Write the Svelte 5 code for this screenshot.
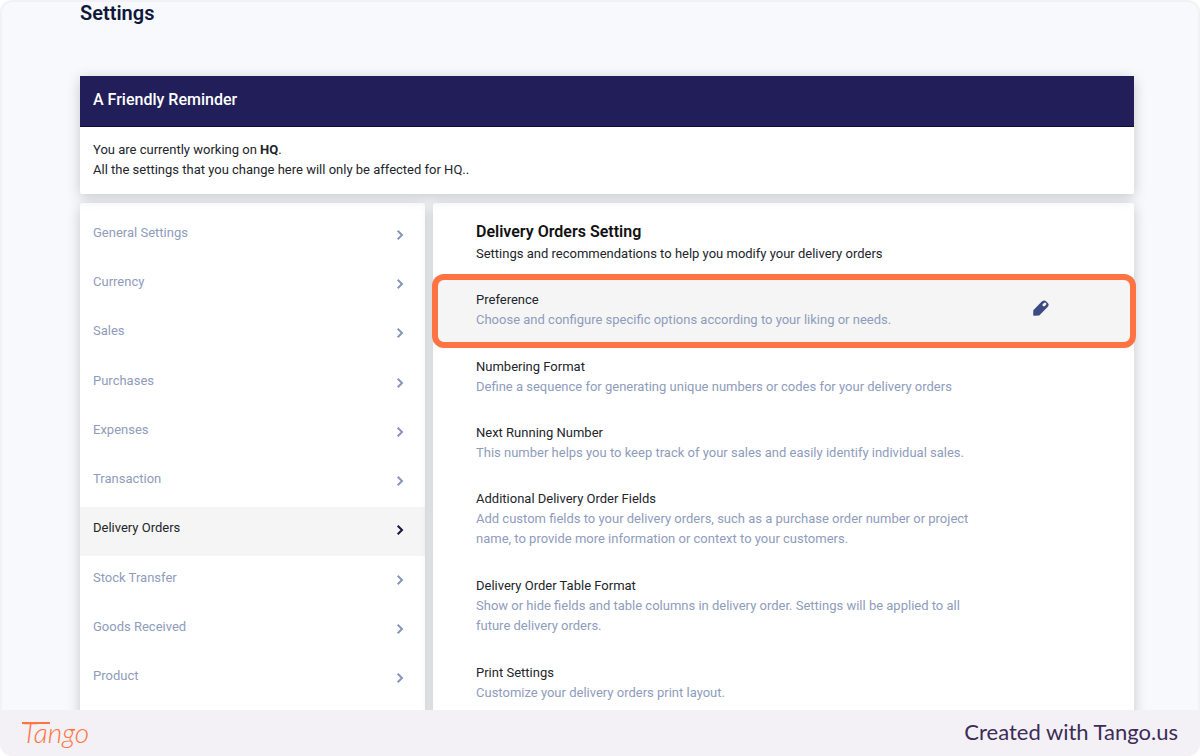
<script>
  const sections = [
    'General Settings', 'Currency', 'Sales', 'Purchases', 'Expenses',
    'Transaction', 'Delivery Orders', 'Stock Transfer', 'Goods Received', 'Product'
  ];
  let active = $state('Delivery Orders');

  const options = [
    { title: 'Preference', text: 'Choose and configure specific options according to your liking or needs.', picked: true },
    { title: 'Numbering Format', text: 'Define a sequence for generating unique numbers or codes for your delivery orders' },
    { title: 'Next Running Number', text: 'This number helps you to keep track of your sales and easily identify individual sales.' },
    { title: 'Additional Delivery Order Fields', text: 'Add custom fields to your delivery orders, such as a purchase order number or project name, to provide more information or context to your customers.', long: true },
    { title: 'Delivery Order Table Format', text: 'Show or hide fields and table columns in delivery order. Settings will be applied to all future delivery orders.', long: true },
    { title: 'Print Settings', text: 'Customize your delivery orders print layout.' }
  ];
</script>

<div class="frame">
  <main>
    <h1>Settings</h1>

    <section class="card reminder">
      <h2>A Friendly Reminder</h2>
      <p>You are currently working on <b>HQ</b>.<br />All the settings that you change here will only be affected for HQ..</p>
    </section>

    <div class="columns">
      <nav class="card" aria-label="Settings sections">
        <ul>
          {#each sections as name}
            <li>
              <button class:active={active === name} onclick={() => (active = name)}>
                <span>{name}</span>
                <svg width="8" height="12" viewBox="0 0 8 12" aria-hidden="true">
                  <path d="M1.7 1.7 6 6 1.7 10.3" />
                </svg>
              </button>
            </li>
          {/each}
        </ul>
      </nav>

      <section class="card detail">
        <header>
          <h2>Delivery Orders Setting</h2>
          <p>Settings and recommendations to help you modify your delivery orders</p>
        </header>
        {#each options as option}
          <article class:picked={option.picked} class:long={option.long}>
            <div class="copy">
              <h3>{option.title}</h3>
              <p>{option.text}</p>
            </div>
            {#if option.picked}
              <button class="edit" aria-label="Edit preference">
                <svg width="16" height="16" viewBox="0 0 16 16" aria-hidden="true">
                  <path fill-rule="evenodd" d="M.3 10.2 8.8 1.6Q11-.5 13 1.2L15 3.2Q16.5 5 14.6 7L6.2 15.4 1 15.8Q.2 15.8.2 15ZM11 2.9 9.9 4Q9 5 9.9 5.9 11 6.8 11.9 5.9L13 4.8Q13.7 4 13 3.1 12 2.1 11 2.9Z" />
                </svg>
              </button>
            {/if}
          </article>
        {/each}
      </section>
    </div>
  </main>

  <footer>
    <a class="logo" href="#tango">Tango</a>
    <span>Created with Tango.us</span>
  </footer>
</div>

<style>
  :global(body) { margin: 0; background: #fff; }
  * { box-sizing: border-box; }
  h1, h2, h3, p, ul { margin: 0; padding: 0; }
  button { font: inherit; border: 0; background: none; cursor: pointer; }

  .frame {
    display: flex;
    flex-direction: column;
    height: 100vh;
    overflow: hidden;
    border-radius: 12px;
    background: #f3f1f6;
    font: 13px/20px Roboto, sans-serif;
    color: #22252b;
  }
  main {
    flex: 1;
    min-height: 0;
    overflow: hidden;
    margin: 2px 2px 0;
    padding: 0 64px 0 78px;
    border-radius: 10px 10px 0 0;
    background: #f8f9fd;
  }
  h1 {
    height: 74px;
    font-size: 20px;
    line-height: 22px;
    font-weight: 600;
    color: #10183a;
  }
  .card {
    background: #fff;
    border-radius: 2px;
    box-shadow: 0 3px 14px rgba(0, 0, 0, 0.2);
  }
  .reminder { position: relative; }
  .reminder h2 {
    padding: 12px 13px 14px;
    border-bottom: 1px solid #0d0a38;
    font-size: 16px;
    line-height: 24px;
    font-weight: 500;
    color: #fff;
    background: #221e5a;
  }
  .reminder p { padding: 13px 13px 14px; }

  .columns {
    display: grid;
    grid-template-columns: 345fr 701fr;
    gap: 8px;
    margin-top: 9px;
    align-items: stretch;
  }
  nav { padding-top: 8px; }
  ul {
    display: flex;
    flex-direction: column;
    min-height: 493px;
    list-style: none;
  }
  li { display: flex; flex: 1; }
  nav button {
    display: flex;
    flex: 1;
    align-items: center;
    justify-content: space-between;
    padding: 0 21px 2px 13px;
    color: #8f9cbc;
  }
  nav button span { padding-bottom: 4px; }
  nav button svg {
    fill: none;
    stroke: #8795bd;
    stroke-width: 2;
  }
  nav button.active { background: #f5f5f5; color: #22252b; }
  nav button.active svg { stroke: #10183a; }

  .detail { padding-bottom: 40px; }
  header { padding: 16px 43px 13px; }
  header h2 {
    font-size: 16px;
    line-height: 25px;
    font-weight: 600;
    color: #111;
  }
  article {
    position: relative;
    display: flex;
    align-items: center;
    justify-content: space-between;
    padding: 13px 85px 13px 43px;
  }
  article.long { padding-bottom: 14px; }
  .copy { max-width: 510px; }
  h3 { font: inherit; }
  article p { color: #8f9cbc; }
  .picked { margin-bottom: 1px; background: #f5f5f5; }
  .picked::after {
    content: '';
    position: absolute;
    inset: -3px -2px -5px -1px;
    border: 6px solid #ff7442;
    border-radius: 12px;
    pointer-events: none;
  }
  .edit { display: flex; padding: 0 0 4px; }
  .edit svg { fill: #3d4b83; }

  footer {
    display: flex;
    flex: none;
    align-items: center;
    justify-content: space-between;
    height: 46px;
    padding: 0 22px 2px;
    font: 22px/24px Lato, sans-serif;
    color: #3d2c58;
  }
  .logo {
    position: relative;
    font: italic 300 28px/32px Lato, cursive;
    color: #ff7442;
    text-decoration: none;
  }
  .logo::before {
    content: '';
    position: absolute;
    top: 6px;
    left: 0;
    width: 28px;
    height: 2px;
    background: currentColor;
  }
</style>
